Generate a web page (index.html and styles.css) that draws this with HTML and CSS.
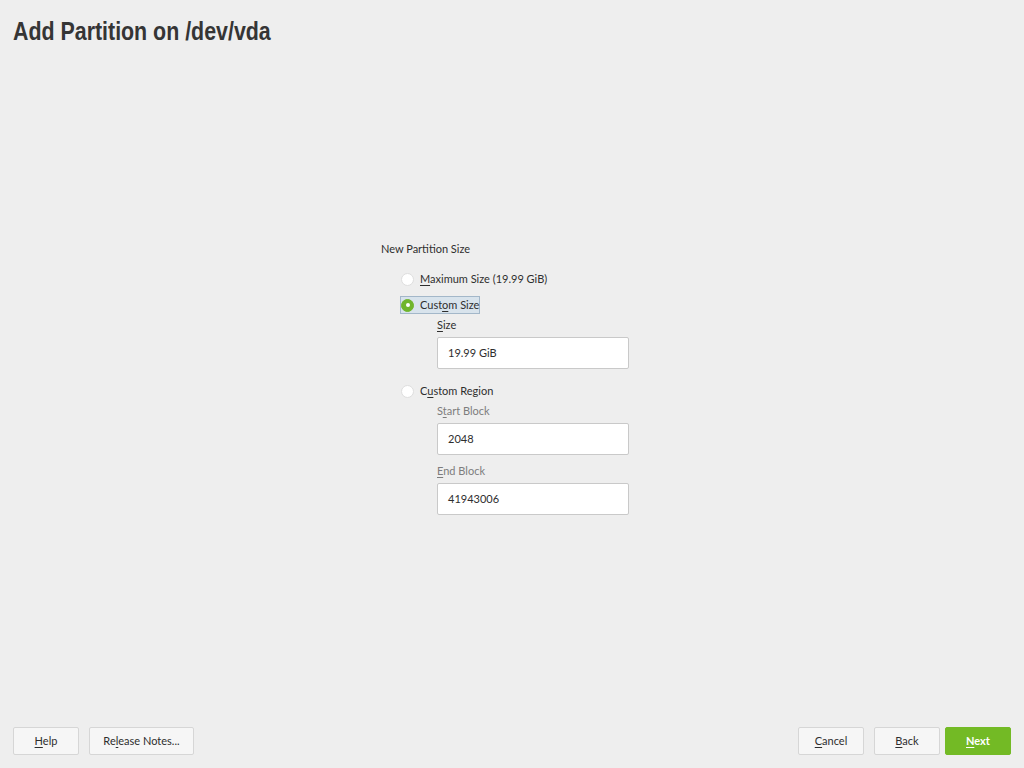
FILE: index.html
```html
<!DOCTYPE html>
<html>
<head>
<meta charset="utf-8">
<link rel="stylesheet" href="styles.css">
</head>
<body>
<div class="page">
  <header class="header"><h1 class="title">Add Partition on /dev/vda</h1></header>
  <main class="main">
    <div class="form">
      <div class="group-title">New Partition Size</div>
      <div class="options">
        <div class="radio-row first"><span class="radio"></span><span class="rlabel"><u>M</u>aximum Size (19.99 GiB)</span></div>
        <div class="radio-row selected"><span class="radio checked"></span><span class="rlabel">Cust<u>o</u>m Size</span></div>
        <div class="sub">
          <div class="field-label"><u>S</u>ize</div>
          <div class="input">19.99 GiB</div>
        </div>
        <div class="radio-row third"><span class="radio"></span><span class="rlabel">C<u>u</u>stom Region</span></div>
        <div class="sub">
          <div class="field-label disabled">S<u>t</u>art Block</div>
          <div class="input">2048</div>
          <div class="field-label disabled second"><u>E</u>nd Block</div>
          <div class="input">41943006</div>
        </div>
      </div>
    </div>
  </main>
  <footer class="footer">
    <div class="btn-group">
      <button class="btn w66"><u>H</u>elp</button>
      <button class="btn w105">Re<u>l</u>ease Notes...</button>
    </div>
    <div class="btn-group right">
      <button class="btn w66"><u>C</u>ancel</button>
      <button class="btn w66"><u>B</u>ack</button>
      <button class="btn w66 primary"><u>N</u>ext</button>
    </div>
  </footer>
</div>
</body>
</html>
```
FILE: styles.css
```css
html, body {
  margin: 0;
  padding: 0;
  background: #eeeeee;
}
body {
  font-family: "Lato", "Open Sans", sans-serif;
  font-size: 11px;
  color: #2e2e2e;
}
.page {
  height: 768px;
  display: flex;
  flex-direction: column;
}
.header {
  padding: 15px 13px 0;
}
.title {
  display: inline-block;
  margin: 0;
  font-family: "Liberation Sans", Arial, sans-serif;
  font-weight: bold;
  font-size: 25px;
  line-height: 32px;
  color: #353535;
  transform: scaleX(0.855);
  transform-origin: left center;
}
.main {
  flex: 1;
  padding-left: 381px;
  padding-top: 195px;
}
.group-title {
  line-height: 14px;
}
.options {
  margin-left: 20px;
  display: flex;
  flex-direction: column;
}
.radio-row {
  display: flex;
  align-items: center;
  height: 18px;
  box-sizing: border-box;
  align-self: flex-start;
  padding: 0 1px 0 0;
}
.radio-row.first { margin-top: 14px; }
.radio-row.selected {
  margin-top: 8px;
  background: #d8e3ec;
  border: 1px solid #a3b7c9;
  padding-right: 0;
  margin-left: -1px;
}
.radio-row.third { margin-top: 13px; }
.radio {
  width: 13px;
  height: 13px;
  border-radius: 50%;
  background: #fff;
  border: 1px solid #dedede;
  box-sizing: border-box;
  margin-right: 6px;
  display: flex;
  align-items: center;
  justify-content: center;
}
.radio.checked {
  background: #6fb52c;
  border-color: #6fb52c;
}
.radio.checked::after {
  content: "";
  width: 4px;
  height: 4px;
  border-radius: 50%;
  background: #fff;
}
.rlabel {
  line-height: 14px;
}
.sub {
  margin-left: 36px;
  display: flex;
  flex-direction: column;
}
.field-label {
  margin-top: 4px;
  line-height: 14px;
}
.field-label.disabled { color: #7d7d7d; }
.field-label.second { margin-top: 9px; }
.input {
  margin-top: 5px;
  width: 192px;
  height: 32px;
  box-sizing: border-box;
  background: #fff;
  border: 1px solid #c9c9c9;
  border-radius: 2px;
  padding-left: 10px;
  line-height: 30px;
  font-size: 11px;
}
u {
  text-decoration: underline;
  text-underline-offset: 2px;
}
.footer {
  display: flex;
  justify-content: space-between;
  padding: 0 13px 13px;
}
.btn-group {
  display: flex;
  gap: 10px;
}
.btn-group.right .primary { margin-left: -5px; }
.btn {
  height: 28px;
  box-sizing: border-box;
  background: #f6f6f6;
  border: 1px solid #d6d6d6;
  border-radius: 2px;
  font-family: "Lato", "Open Sans", sans-serif;
  font-size: 11px;
  color: #2e2e2e;
  padding: 0 0 1px;
}
.w66 { width: 66px; }
.w105 { width: 105px; }
.btn.primary {
  background: #73ba25;
  border-color: #73ba25;
  color: #fff;
  font-weight: bold;
}
```
